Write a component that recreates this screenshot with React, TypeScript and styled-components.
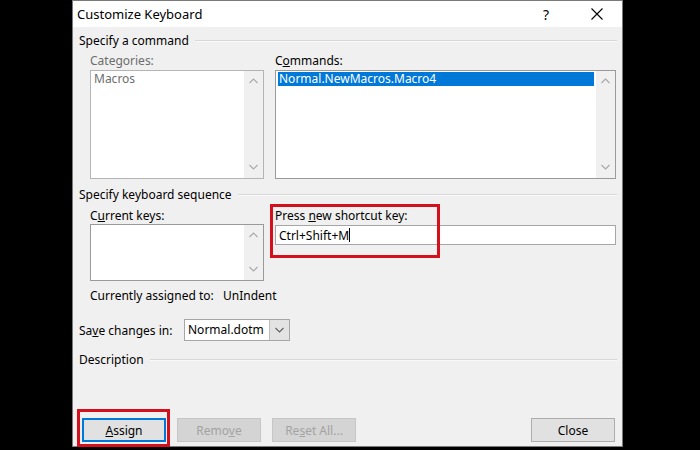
import styled, { createGlobalStyle } from 'styled-components';

const GlobalStyle = createGlobalStyle`
  html, body {
    margin: 0;
    padding: 0;
    background: #000;
  }
  body {
    font-family: 'Noto Sans', 'Open Sans', sans-serif;
    font-size: 12px;
    color: #000;
  }
`;

const Page = styled.div`
  width: 700px;
  height: 450px;
  padding-left: 72px;
  box-sizing: border-box;
  background: #000;
  overflow: hidden;
`;

const Dialog = styled.div`
  width: 551px;
  height: 447px;
  box-sizing: border-box;
  border: 1px solid #7a7a7a;
  background: #f0f0f0;
  display: flex;
  flex-direction: column;
`;

const TitleBar = styled.div`
  height: 26px;
  background: #fff;
  display: flex;
  align-items: center;
  padding-left: 4px;
`;

const Title = styled.div`
  flex: 1;
  font-size: 13px;
`;

const TitleButton = styled.div<{ $width: number }>`
  width: ${(p) => p.$width}px;
  height: 26px;
  display: flex;
  align-items: center;
  justify-content: center;
  font-size: 14px;
`;

const Body = styled.div`
  flex: 1;
  display: flex;
  flex-direction: column;
  padding: 6px 5px 4px 6px;
`;

const GroupHeader = styled.div<{ $top?: number }>`
  display: flex;
  align-items: center;
  gap: 6px;
  height: 16px;
  line-height: 16px;
  margin-top: ${(p) => p.$top ?? 0}px;

  &::after {
    content: '';
    flex: 1;
    border-top: 1px solid #d8d8d8;
    border-bottom: 1px solid #fafafa;
  }
`;

const TwoColumns = styled.div<{ $top: number }>`
  display: grid;
  grid-template-columns: 174px 1fr;
  column-gap: 11px;
  padding: 0 1px 0 11px;
  margin-top: ${(p) => p.$top}px;
`;

const Field = styled.div<{ $gap: number }>`
  position: relative;
  display: flex;
  flex-direction: column;
  gap: ${(p) => p.$gap}px;
`;

const Label = styled.div<{ $disabled?: boolean }>`
  height: 16px;
  line-height: 16px;
  color: ${(p) => (p.$disabled ? '#6d6d6d' : '#000')};
`;

const ListBox = styled.div<{ $height: number; $disabled?: boolean }>`
  height: ${(p) => p.$height}px;
  box-sizing: border-box;
  border: 1px solid ${(p) => (p.$disabled ? '#b4b4b4' : '#9a9a9a')};
  background: #fff;
  display: flex;
`;

const ListItems = styled.div`
  flex: 1;
  padding: 1px 2px;
`;

const ListItem = styled.div<{ $selected?: boolean; $disabled?: boolean }>`
  height: 14px;
  line-height: 14px;
  padding-left: 1px;
  color: ${(p) => (p.$selected ? '#fff' : p.$disabled ? '#6d6d6d' : '#000')};
  background: ${(p) => (p.$selected ? '#0078d7' : 'transparent')};
`;

const ScrollBar = styled.div`
  width: 19px;
  background: #f0f0f0;
  display: flex;
  flex-direction: column;
  justify-content: space-between;
  align-items: center;
  padding: 7px 0 8px;
  box-sizing: border-box;
`;

const TextBox = styled.div`
  height: 20px;
  margin-top: 1px;
  box-sizing: border-box;
  border: 1px solid #a6a6a6;
  background: #fff;
  display: flex;
  align-items: center;
  padding-left: 3px;
`;

const Caret = styled.span`
  display: inline-block;
  width: 1px;
  height: 14px;
  background: #000;
`;

const Highlight = styled.div<{ $left: number; $top: number; $width: number; $height: number }>`
  position: absolute;
  left: ${(p) => p.$left}px;
  top: ${(p) => p.$top}px;
  width: ${(p) => p.$width}px;
  height: ${(p) => p.$height}px;
  box-sizing: border-box;
  border: 3px solid #d4101c;
  pointer-events: none;
`;

const InfoRow = styled.div<{ $top: number }>`
  display: flex;
  height: 16px;
  line-height: 16px;
  padding-left: 11px;
  margin-top: ${(p) => p.$top}px;
`;

const InfoLabel = styled.span<{ $width: number }>`
  width: ${(p) => p.$width}px;
`;

const SaveRow = styled.div<{ $top: number }>`
  display: flex;
  align-items: center;
  height: 22px;
  margin-top: ${(p) => p.$top}px;
`;

const Select = styled.div`
  width: 106px;
  height: 22px;
  box-sizing: border-box;
  border: 1px solid #a6a6a6;
  background: #fff;
  display: flex;
  align-items: stretch;
`;

const SelectValue = styled.div`
  flex: 1;
  padding-left: 3px;
  line-height: 20px;
`;

const SelectButton = styled.div`
  width: 19px;
  background: #e3e3e3;
  border-left: 1px solid #bdbdbd;
  display: flex;
  align-items: center;
  justify-content: center;
`;

const ButtonRow = styled.div`
  margin-top: auto;
  display: flex;
  gap: 11px;
  padding: 0 2px 0 3px;
`;

const ButtonSlot = styled.div<{ $push?: boolean }>`
  position: relative;
  margin-left: ${(p) => (p.$push ? 'auto' : '0')};
`;

const Button = styled.button<{ $variant?: 'default' | 'focused' | 'disabled' }>`
  width: 84px;
  height: 24px;
  box-sizing: border-box;
  padding: 0;
  font-family: inherit;
  font-size: 12px;
  color: ${(p) => (p.$variant === 'disabled' ? '#a3a3a3' : '#000')};
  background: ${(p) => (p.$variant === 'disabled' ? '#d4d4d4' : '#e1e1e1')};
  border: ${(p) =>
    p.$variant === 'focused'
      ? '2px solid #0078d7'
      : p.$variant === 'disabled'
        ? '1px solid #c6c6c6'
        : '1px solid #adadad'};
`;

const Chevron = ({ up, color = '#a8a8a8' }: { up?: boolean; color?: string }) => (
  <svg width="9" height="6" viewBox="0 0 9 6">
    <path d={up ? 'M0.5 5L4.5 1L8.5 5' : 'M0.5 1L4.5 5L8.5 1'} fill="none" stroke={color} strokeWidth="1.1" />
  </svg>
);

const CloseIcon = () => (
  <svg width="12" height="12" viewBox="0 0 12 12">
    <path d="M0.5 0.5L11.5 11.5M11.5 0.5L0.5 11.5" stroke="#000" strokeWidth="1.1" />
  </svg>
);

const Scroll = () => (
  <ScrollBar>
    <Chevron up />
    <Chevron />
  </ScrollBar>
);

const App = () => {
  return (
    <Page>
      <GlobalStyle />
      <Dialog>
        <TitleBar>
          <Title>Customize Keyboard</Title>
          <TitleButton $width={52}>?</TitleButton>
          <TitleButton $width={50}>
            <CloseIcon />
          </TitleButton>
        </TitleBar>
        <Body>
          <GroupHeader>Specify a command</GroupHeader>
          <TwoColumns $top={4}>
            <Field $gap={1}>
              <Label $disabled>Categories:</Label>
              <ListBox $height={109} $disabled>
                <ListItems>
                  <ListItem $disabled>Macros</ListItem>
                </ListItems>
                <Scroll />
              </ListBox>
            </Field>
            <Field $gap={1}>
              <Label>
                C<u>o</u>mmands:
              </Label>
              <ListBox $height={109}>
                <ListItems>
                  <ListItem $selected>Normal.NewMacros.Macro4</ListItem>
                </ListItems>
                <Scroll />
              </ListBox>
            </Field>
          </TwoColumns>

          <GroupHeader $top={8}>Specify keyboard sequence</GroupHeader>
          <TwoColumns $top={5}>
            <Field $gap={0}>
              <Label>
                C<u>u</u>rrent keys:
              </Label>
              <ListBox $height={57}>
                <ListItems />
                <Scroll />
              </ListBox>
            </Field>
            <Field $gap={0}>
              <Label>
                Press <u>n</u>ew shortcut key:
              </Label>
              <TextBox>
                Ctrl+Shift+M
                <Caret />
              </TextBox>
              <Highlight $left={-5} $top={-4} $width={170} $height={54} />
            </Field>
          </TwoColumns>

          <InfoRow $top={7}>
            <InfoLabel $width={133}>Currently assigned to:</InfoLabel>
            <span>UnIndent</span>
          </InfoRow>

          <SaveRow $top={15}>
            <InfoLabel $width={105}>
              Sa<u>v</u>e changes in:
            </InfoLabel>
            <Select>
              <SelectValue>Normal.dotm</SelectValue>
              <SelectButton>
                <Chevron color="#606060" />
              </SelectButton>
            </Select>
          </SaveRow>

          <GroupHeader $top={11}>Description</GroupHeader>

          <ButtonRow>
            <ButtonSlot>
              <Button $variant="focused">
                <u>A</u>ssign
              </Button>
              <Highlight $left={-5} $top={-9} $width={93} $height={38} />
            </ButtonSlot>
            <ButtonSlot>
              <Button $variant="disabled">
                Remo<u>v</u>e
              </Button>
            </ButtonSlot>
            <ButtonSlot>
              <Button $variant="disabled">
                Re<u>s</u>et All...
              </Button>
            </ButtonSlot>
            <ButtonSlot $push>
              <Button>Close</Button>
            </ButtonSlot>
          </ButtonRow>
        </Body>
      </Dialog>
    </Page>
  );
};

export default App;
